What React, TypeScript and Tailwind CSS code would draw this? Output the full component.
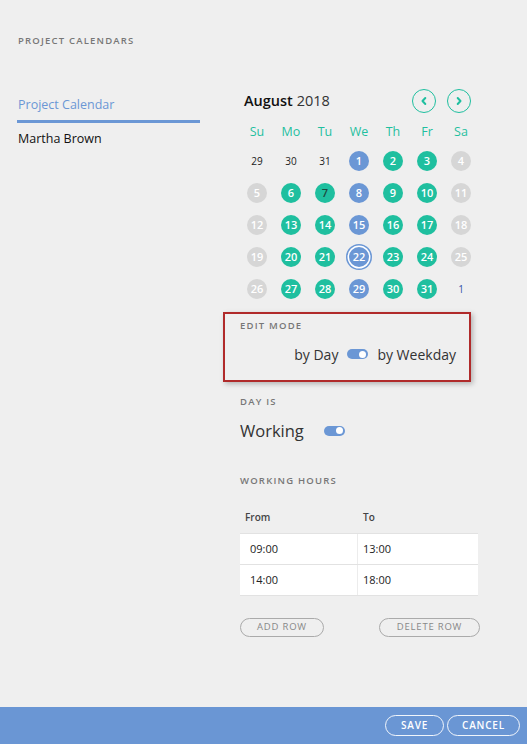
import React from "react";

type DayKind = "out" | "next" | "blue" | "teal" | "gray";

const weekdays = ["Su", "Mo", "Tu", "We", "Th", "Fr", "Sa"];

const days: { n: number; kind: DayKind; dark?: boolean; today?: boolean }[] = [
  { n: 29, kind: "out" },
  { n: 30, kind: "out" },
  { n: 31, kind: "out" },
  { n: 1, kind: "blue" },
  { n: 2, kind: "teal" },
  { n: 3, kind: "teal" },
  { n: 4, kind: "gray" },
  { n: 5, kind: "gray" },
  { n: 6, kind: "teal" },
  { n: 7, kind: "teal", dark: true },
  { n: 8, kind: "blue" },
  { n: 9, kind: "teal" },
  { n: 10, kind: "teal" },
  { n: 11, kind: "gray" },
  { n: 12, kind: "gray" },
  { n: 13, kind: "teal" },
  { n: 14, kind: "teal" },
  { n: 15, kind: "blue" },
  { n: 16, kind: "teal" },
  { n: 17, kind: "teal" },
  { n: 18, kind: "gray" },
  { n: 19, kind: "gray" },
  { n: 20, kind: "teal" },
  { n: 21, kind: "teal" },
  { n: 22, kind: "blue", today: true },
  { n: 23, kind: "teal" },
  { n: 24, kind: "teal" },
  { n: 25, kind: "gray" },
  { n: 26, kind: "gray" },
  { n: 27, kind: "teal" },
  { n: 28, kind: "teal" },
  { n: 29, kind: "blue" },
  { n: 30, kind: "teal" },
  { n: 31, kind: "teal" },
  { n: 1, kind: "next" },
];

function Day({ n, kind, dark, today }: (typeof days)[number]) {
  if (kind === "out") {
    return <span className="text-[10px] text-[#222]">{n}</span>;
  }
  if (kind === "next") {
    return <span className="text-[10px] text-[#3355aa]">{n}</span>;
  }
  const bg =
    kind === "blue" ? "bg-[#6b97d5]" : kind === "teal" ? "bg-[#1fbf9f]" : "bg-[#d6d6d6]";
  return (
    <span
      className={`flex h-[20px] w-[20px] items-center justify-center rounded-full text-[11px] font-semibold ${bg} ${
        dark ? "text-[#1d4a40]" : "text-white"
      } ${today ? "ring-[1.5px] ring-white ring-offset-0 shadow-[0_0_0_3px_#6b97d5]" : ""}`}
    >
      {n}
    </span>
  );
}

function Toggle() {
  return (
    <span className="relative inline-flex h-[10px] w-[21px] items-center rounded-full bg-[#6b97d5]">
      <span className="absolute right-[2px] h-[7px] w-[7px] rounded-full bg-white" />
    </span>
  );
}

function NavButton({ dir }: { dir: "prev" | "next" }) {
  return (
    <button
      type="button"
      className="flex h-[24px] w-[24px] items-center justify-center rounded-full border-[1.5px] border-[#1fbf9f] text-[#1fbf9f]"
    >
      <svg width="10" height="10" viewBox="0 0 10 10" fill="none">
        <path
          d={dir === "prev" ? "M6.3 2 L3.5 5 L6.3 8" : "M3.7 2 L6.5 5 L3.7 8"}
          stroke="currentColor"
          strokeWidth="2"
          strokeLinecap="round"
          strokeLinejoin="round"
        />
      </svg>
    </button>
  );
}

export default function App() {
  return (
    <div
      className="flex h-[744px] w-[527px] flex-col bg-[#efefef] text-[#222]"
      style={{ fontFamily: '"Open Sans", "Noto Sans", sans-serif' }}
    >
      <div className="flex-1">
        <div className="pl-[18px] pt-[34px] text-[9.5px] font-semibold tracking-[1.2px] text-[#777]">
          PROJECT CALENDARS
        </div>

        <div className="mt-[33px] flex">
          {/* calendars list */}
          <div className="ml-[17px] w-[183px]">
            <div className="pl-[1px] pt-[15px] text-[12.5px] font-medium leading-[18px] text-[#6b97d5]">
              Project Calendar
            </div>
            <div className="mt-[6px] h-[3px] bg-[#6b97d5]" />
            <div className="mt-[7px] pl-[1px] text-[12.5px] font-medium leading-[18px] text-[#111]">
              Martha Brown
            </div>
          </div>

          {/* editor */}
          <div className="ml-[40px] w-[240px]">
            <div className="flex items-center justify-between pl-[4px] pr-[9px] pt-[8px]">
              <div className="text-[14.5px] leading-[20px]">
                <span className="font-semibold text-[#111]">August</span> <span className="text-[#333]">2018</span>
              </div>
              <div className="flex gap-[11px]">
                <NavButton dir="prev" />
                <NavButton dir="next" />
              </div>
            </div>

            <div className="mt-[10px] grid w-[238px] grid-cols-7">
              {weekdays.map((d) => (
                <div
                  key={d}
                  className="flex h-[18px] items-center justify-center text-[12.5px] text-[#1fbf9f]"
                >
                  {d}
                </div>
              ))}
            </div>
            <div className="mt-[4px] grid w-[238px] grid-cols-7">
              {days.map((d, i) => (
                <div key={i} className="flex h-[32px] items-center justify-center">
                  <Day {...d} />
                </div>
              ))}
            </div>

            <div className="-ml-[17px] mt-[7px] h-[70px] w-[248px] border-2 border-[#b02a2a] shadow-[2px_2px_5px_rgba(0,0,0,0.25)]">
              <div className="pl-[15px] pt-[5px] text-[9.5px] font-semibold tracking-[1.2px] text-[#777]">
                EDIT MODE
              </div>
              <div className="mt-[10px] flex items-center justify-end gap-[9px] pr-[13px] text-[14px] text-[#333]">
                <span>by Day</span>
                <Toggle />
                <span>by Weekday</span>
              </div>
            </div>

            <div className="mt-[13px] text-[9.5px] font-semibold tracking-[1.2px] text-[#777]">DAY IS</div>
            <div className="mt-[10px] flex items-center gap-[20px]">
              <span className="text-[16.5px] leading-[22px] text-[#333]">Working</span>
              <Toggle />
            </div>

            <div className="mt-[32px] text-[9.5px] font-semibold tracking-[1.2px] text-[#777]">
              WORKING HOURS
            </div>

            <div className="mt-[15px] w-[238px]">
              <div className="flex h-[30px] items-center text-[10px] font-semibold text-[#444]">
                <span className="w-[118px] pl-[5px]">From</span>
                <span className="pl-[5px]">To</span>
              </div>
              {[
                ["09:00", "13:00"],
                ["14:00", "18:00"],
              ].map(([a, b]) => (
                <div key={a} className="flex h-[31px] border-t border-[#e2e2e2] bg-white text-[11px] text-[#222]">
                  <span className="flex w-[118px] items-center border-r border-[#ececec] pl-[10px]">{a}</span>
                  <span className="flex items-center pl-[5px]">{b}</span>
                </div>
              ))}
              <div className="h-px bg-[#e2e2e2]" />
            </div>

            <div className="mt-[22px] flex w-[240px] justify-between">
              <button
                type="button"
                className="h-[19px] w-[84px] rounded-full border border-[#aaa] text-[9.5px] tracking-[0.8px] text-[#888]"
              >
                ADD ROW
              </button>
              <button
                type="button"
                className="h-[19px] w-[101px] rounded-full border border-[#aaa] text-[9.5px] tracking-[0.8px] text-[#888]"
              >
                DELETE ROW
              </button>
            </div>
          </div>
        </div>
      </div>

      <div className="flex h-[37px] items-center justify-end gap-[3px] bg-[#6a96d4] pr-[7px]">
        <button
          type="button"
          className="h-[21px] w-[59px] rounded-full border border-white/90 text-[10px] font-semibold tracking-[0.8px] text-white"
        >
          SAVE
        </button>
        <button
          type="button"
          className="h-[21px] w-[73px] rounded-full border border-white/90 text-[10px] font-semibold tracking-[0.8px] text-white"
        >
          CANCEL
        </button>
      </div>
    </div>
  );
}
